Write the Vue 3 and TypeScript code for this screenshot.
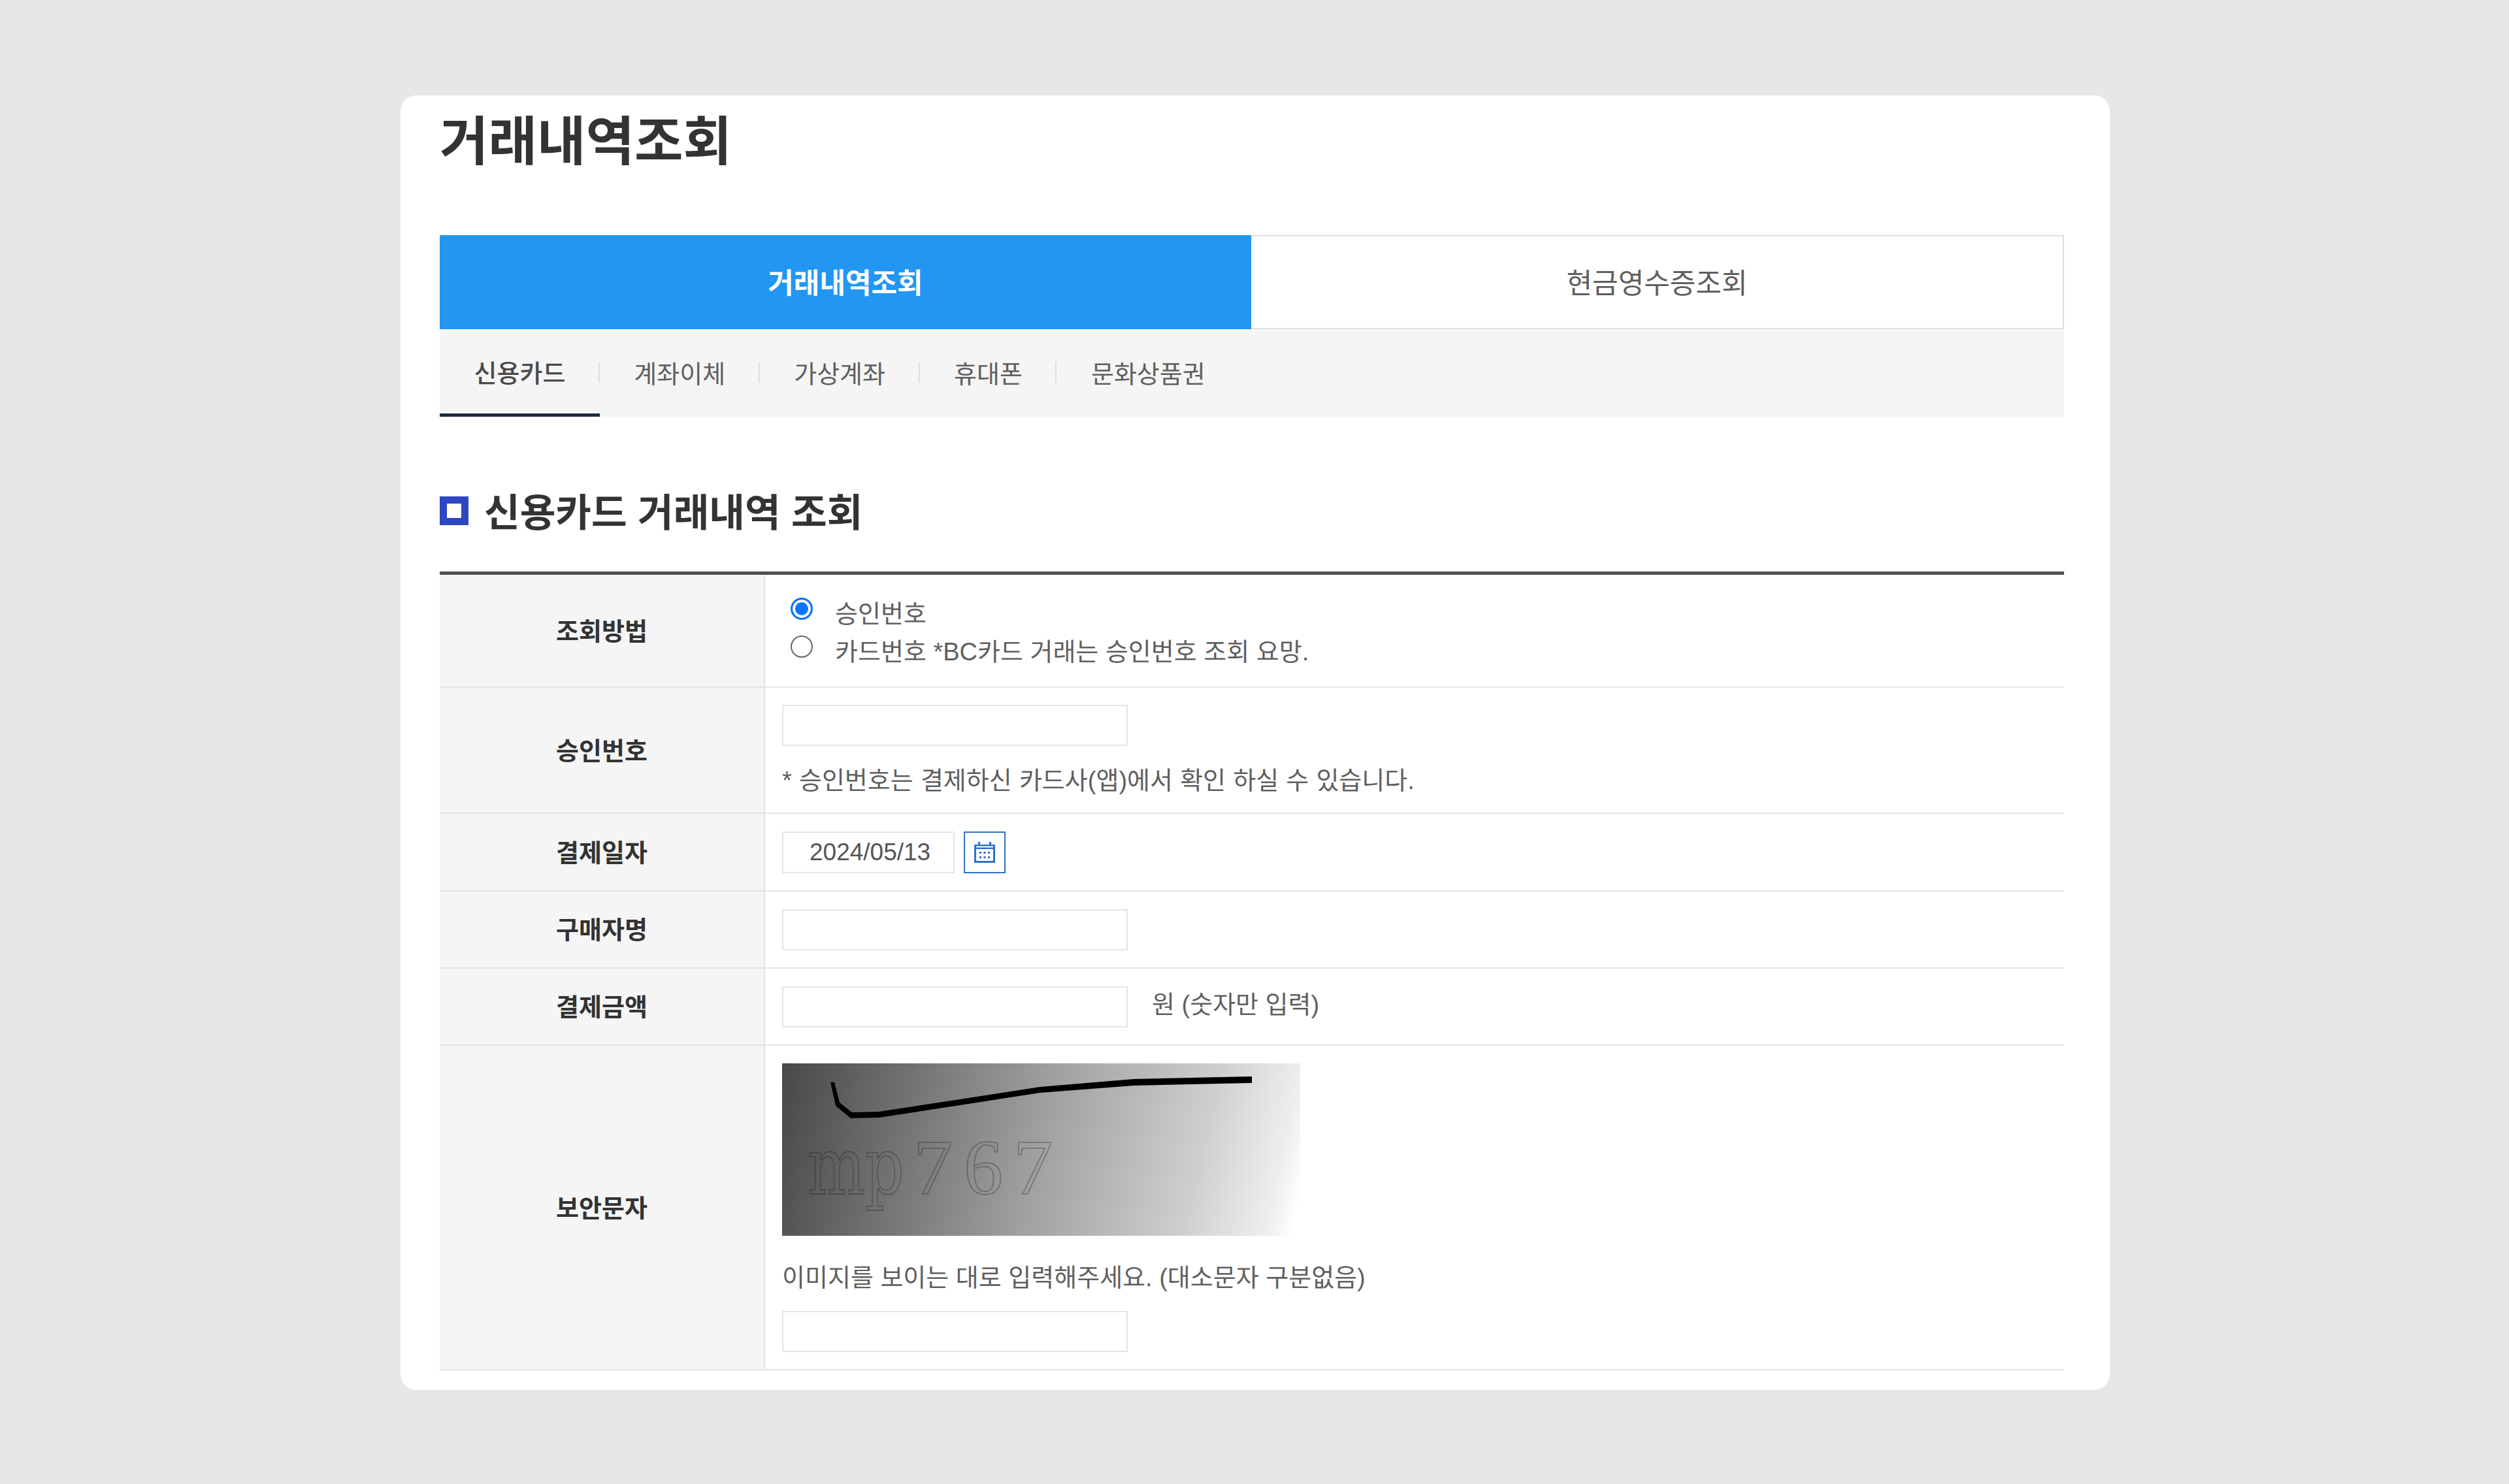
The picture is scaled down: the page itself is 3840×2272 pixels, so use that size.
<template>
  <div class="page">
    <div class="card">
      <h1 class="page-title">거래내역조회</h1>

      <div class="main-tabs">
        <div class="main-tab active">거래내역조회</div>
        <div class="main-tab">현금영수증조회</div>
      </div>
      <ul class="sub-tabs">
        <li
          v-for="(tab, idx) in subTabs"
          :key="tab"
          class="sub-tab"
          :class="{ active: idx === 0 }"
        >{{ tab }}</li>
      </ul>

      <h2 class="section-title"><span class="section-mark"></span>신용카드 거래내역 조회</h2>

      <table class="form-table">
        <tbody>
          <tr class="row-method">
            <th>조회방법</th>
            <td>
              <label class="radio-line"><input type="radio" name="method" checked />승인번호</label>
              <label class="radio-line"><input type="radio" name="method" />카드번호 *BC카드 거래는 승인번호 조회 요망.</label>
            </td>
          </tr>
          <tr class="row-approval">
            <th>승인번호</th>
            <td>
              <input class="field" type="text" />
              <p class="note">* 승인번호는 결제하신 카드사(앱)에서 확인 하실 수 있습니다.</p>
            </td>
          </tr>
          <tr class="row-date">
            <th>결제일자</th>
            <td>
              <div class="inline">
                <input class="field date" type="text" value="2024/05/13" />
                <button class="cal-btn" type="button">
                  <svg width="34" height="34" viewBox="0 0 34 34">
                    <path fill="#2f72c8" d="M7 1h3v4h14V1h3v4h6v28H1V5h6z" />
                    <rect x="4" y="12" width="26" height="18" fill="#fff" />
                    <rect x="4" y="7.5" width="26" height="2" fill="#fff" />
                    <g fill="#2f72c8">
                      <rect x="9" y="16" width="3" height="3" />
                      <rect x="15.5" y="16" width="3" height="3" />
                      <rect x="22" y="16" width="3" height="3" />
                      <rect x="9" y="23" width="3" height="3" />
                      <rect x="15.5" y="23" width="3" height="3" />
                      <rect x="22" y="23" width="3" height="3" />
                    </g>
                  </svg>
                </button>
              </div>
            </td>
          </tr>
          <tr class="row-single">
            <th>구매자명</th>
            <td><input class="field" type="text" /></td>
          </tr>
          <tr class="row-single">
            <th>결제금액</th>
            <td>
              <div class="inline">
                <input class="field" type="text" />
                <span class="unit">원 (숫자만 입력)</span>
              </div>
            </td>
          </tr>
          <tr class="row-captcha">
            <th>보안문자</th>
            <td>
              <svg class="captcha" width="793" height="264" viewBox="0 0 793 264">
                <defs>
                  <linearGradient id="capBg" gradientUnits="userSpaceOnUse" x1="0" y1="0" x2="800" y2="180">
                    <stop offset="0" stop-color="#484848" />
                    <stop offset="0.5" stop-color="#a0a0a0" />
                    <stop offset="0.8" stop-color="#cfcfcf" />
                    <stop offset="0.89" stop-color="#e2e2e2" />
                    <stop offset="0.95" stop-color="#eeeeee" />
                    <stop offset="1" stop-color="#ffffff" />
                  </linearGradient>
                </defs>
                <rect width="793" height="264" fill="url(#capBg)" />
                <polygon fill="#000" points="74,29 80,29 88,60 107,75 148,74 395,36 538,24 719,20 719,30 538,34 395,45 149,83 105,84 82,65" />
                <g class="captcha-text">
                  <text class="slab" transform="translate(39,200) scale(.77,1)">mp</text>
                  <text x="201" y="200">7</text>
                  <text x="278" y="200">6</text>
                  <text x="354" y="200">7</text>
                </g>
              </svg>
              <p class="captcha-hint">이미지를 보이는 대로 입력해주세요. (대소문자 구분없음)</p>
              <input class="field" type="text" />
            </td>
          </tr>
        </tbody>
      </table>
    </div>
  </div>
</template>

<script setup lang="ts">
const subTabs: string[] = ["신용카드", "계좌이체", "가상계좌", "휴대폰", "문화상품권"];
</script>

<style>
html,
body {
  margin: 0;
  background: #e7e7e7;
}
</style>

<style scoped>
* {
  box-sizing: border-box;
}

.page {
  min-height: 2272px;
  padding-top: 146px;
  font-family: "Liberation Sans", "Noto Sans CJK KR", sans-serif;
  font-size: 38px;
  color: #5f5f5f;
}

.card {
  width: 2616px;
  height: 1982px;
  margin-left: 613px;
  padding: 0 70px 0 60px;
  background: #fff;
  border-radius: 24px;
}

.page-title {
  margin: 0 0 74px;
  height: 140px;
  line-height: 142px;
  font-size: 81px;
  font-weight: 700;
  color: #333;
}

.main-tabs {
  display: flex;
  height: 144px;
}

.main-tab {
  flex: 1;
  display: flex;
  align-items: center;
  justify-content: center;
  padding-bottom: 4px;
  font-size: 43px;
  color: #5f5f5f;
  border: 2px solid #e0e0e0;
  border-left: none;
}

.main-tab.active {
  background: #2196f3;
  border: none;
  color: #fff;
  font-weight: 700;
}

.sub-tabs {
  display: flex;
  height: 134px;
  margin: 0;
  padding: 0;
  list-style: none;
  background: #f5f5f5;
}

.sub-tab {
  position: relative;
  display: flex;
  align-items: center;
  padding: 0 52.5px 3px;
}

.sub-tab:not(:last-child)::after {
  content: "";
  position: absolute;
  top: 50px;
  right: 0;
  width: 2px;
  height: 32px;
  background: #ddd;
}

.sub-tab.active {
  font-weight: 500;
  color: #4a4a4a;
  border-bottom: 5px solid #1c2b3c;
  padding-bottom: 0;
}

.section-title {
  display: flex;
  align-items: center;
  gap: 24px;
  height: 80px;
  margin: 102px 0 55px;
  font-size: 59.4px;
  font-weight: 700;
  color: #333;
}

.section-mark {
  width: 44px;
  height: 44px;
  margin-top: 4px;
  border: 11px solid #2d46c2;
}

.form-table {
  width: 100%;
  border-collapse: collapse;
  table-layout: fixed;
  border-top: 5px solid #4f4f4f;
}

.form-table th {
  width: 497px;
  padding: 0 0 4px;
  background: #f5f5f5;
  border-right: 2px solid #e3e3ea;
  border-bottom: 2px solid #e3e3ea;
  font-weight: 700;
  color: #333;
  text-align: center;
}

.form-table td {
  padding: 27px 26px 0;
  border-bottom: 2px solid #e3e3ea;
  vertical-align: top;
}

.row-method {
  height: 174px;
}

.row-method td {
  padding-top: 31px;
}

.row-approval {
  height: 193px;
}

.row-approval td {
  padding-top: 26px;
}

.row-date {
  height: 119px;
}

.row-single {
  height: 118px;
}

.row-captcha {
  height: 497px;
}

.radio-line {
  display: flex;
  align-items: flex-start;
  height: 58px;
  line-height: 58px;
}

.radio-line input {
  appearance: none;
  width: 34px;
  height: 34px;
  margin: 4px 34px 0 13px;
  border: 2px solid #666;
  border-radius: 50%;
  background: #fff;
  flex: none;
}

.radio-line input:checked {
  border: 3px solid #0a75ff;
  background: #0a75ff;
  box-shadow: inset 0 0 0 4px #fff;
}

.field {
  display: block;
  width: 529px;
  height: 63px;
  padding: 0 40px;
  border: 2px solid #e3e3ea;
  background: #fff;
  font-family: inherit;
  font-size: inherit;
  color: #555;
  outline: none;
}

.field.date {
  width: 264px;
  height: 64px;
  padding: 0 0 0 40px;
  font-size: 37px;
}

.note {
  margin: 27px 0 0;
  line-height: 52px;
  word-spacing: 0.6px;
}

.inline {
  display: flex;
  align-items: flex-start;
}

.cal-btn {
  display: flex;
  align-items: center;
  justify-content: center;
  width: 64px;
  height: 64px;
  margin-left: 14px;
  padding: 0;
  border: 2px solid #2f72c8;
  background: #fff;
}

.unit {
  margin-left: 37px;
  line-height: 56px;
}

.captcha {
  display: block;
}

.captcha-text {
  font-family: "Liberation Serif", serif;
  font-size: 120px;
  fill: none;
  stroke: rgba(0, 0, 0, 0.24);
  stroke-width: 2;
}

.captcha-text .slab {
  font-family: "DejaVu Serif", serif;
  font-size: 121px;
}

.captcha-hint {
  margin: 38px 0 25px;
  line-height: 52px;
}
</style>
